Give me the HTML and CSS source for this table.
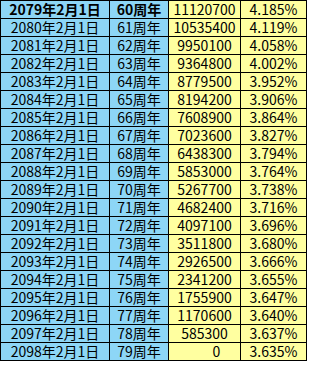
FILE: index.html
```html
<!DOCTYPE html>
<html lang="zh">
<head>
<meta charset="utf-8">
<link rel="stylesheet" href="styles.css">
</head>
<body>
<table class="sheet">
  <colgroup>
    <col class="c-date"><col class="c-year"><col class="c-amt"><col class="c-pct">
  </colgroup>
  <tbody>
    <tr class="head"><td class="b">2079年2月1日</td><td class="b">60周年</td><td class="y">11120700</td><td class="y">4.185%</td></tr>
    <tr><td class="b">2080年2月1日</td><td class="b">61周年</td><td class="y">10535400</td><td class="y">4.119%</td></tr>
    <tr><td class="b">2081年2月1日</td><td class="b">62周年</td><td class="y">9950100</td><td class="y">4.058%</td></tr>
    <tr><td class="b">2082年2月1日</td><td class="b">63周年</td><td class="y">9364800</td><td class="y">4.002%</td></tr>
    <tr><td class="b">2083年2月1日</td><td class="b">64周年</td><td class="y">8779500</td><td class="y">3.952%</td></tr>
    <tr><td class="b">2084年2月1日</td><td class="b">65周年</td><td class="y">8194200</td><td class="y">3.906%</td></tr>
    <tr><td class="b">2085年2月1日</td><td class="b">66周年</td><td class="y">7608900</td><td class="y">3.864%</td></tr>
    <tr><td class="b">2086年2月1日</td><td class="b">67周年</td><td class="y">7023600</td><td class="y">3.827%</td></tr>
    <tr><td class="b">2087年2月1日</td><td class="b">68周年</td><td class="y">6438300</td><td class="y">3.794%</td></tr>
    <tr><td class="b">2088年2月1日</td><td class="b">69周年</td><td class="y">5853000</td><td class="y">3.764%</td></tr>
    <tr><td class="b">2089年2月1日</td><td class="b">70周年</td><td class="y">5267700</td><td class="y">3.738%</td></tr>
    <tr><td class="b">2090年2月1日</td><td class="b">71周年</td><td class="y">4682400</td><td class="y">3.716%</td></tr>
    <tr><td class="b">2091年2月1日</td><td class="b">72周年</td><td class="y">4097100</td><td class="y">3.696%</td></tr>
    <tr><td class="b">2092年2月1日</td><td class="b">73周年</td><td class="y">3511800</td><td class="y">3.680%</td></tr>
    <tr><td class="b">2093年2月1日</td><td class="b">74周年</td><td class="y">2926500</td><td class="y">3.666%</td></tr>
    <tr><td class="b">2094年2月1日</td><td class="b">75周年</td><td class="y">2341200</td><td class="y">3.655%</td></tr>
    <tr><td class="b">2095年2月1日</td><td class="b">76周年</td><td class="y">1755900</td><td class="y">3.647%</td></tr>
    <tr><td class="b">2096年2月1日</td><td class="b">77周年</td><td class="y">1170600</td><td class="y">3.640%</td></tr>
    <tr><td class="b">2097年2月1日</td><td class="b">78周年</td><td class="y">585300</td><td class="y">3.637%</td></tr>
    <tr><td class="b">2098年2月1日</td><td class="b">79周年</td><td class="y zero">0</td><td class="y">3.635%</td></tr>
  </tbody>
</table>
</body>
</html>
```

FILE: styles.css
```css
html, body {
  margin: 0;
  padding: 0;
  background: #ffffff;
}

.sheet {
  border-collapse: collapse;
  table-layout: fixed;
  width: 306px;
  font-family: "Noto Sans CJK SC", "Noto Sans", sans-serif;
  font-size: 14px;
  color: #000;
}

.c-date { width: 109px; }
.c-year { width: 59px; }
.c-amt  { width: 72px; }
.c-pct  { width: 66px; }

.sheet td {
  border: 1px solid #000;
  height: 17px;
  padding: 0;
  line-height: 17px;
  text-align: center;
  white-space: nowrap;
  overflow: hidden;
}

.sheet td.b {
  background: #8dd6f6;
}

.sheet td.y {
  background: #ffffa0;
}

.sheet td.zero {
  padding-left: 24px;
}

.head td.b {
  font-weight: bold;
}
```
